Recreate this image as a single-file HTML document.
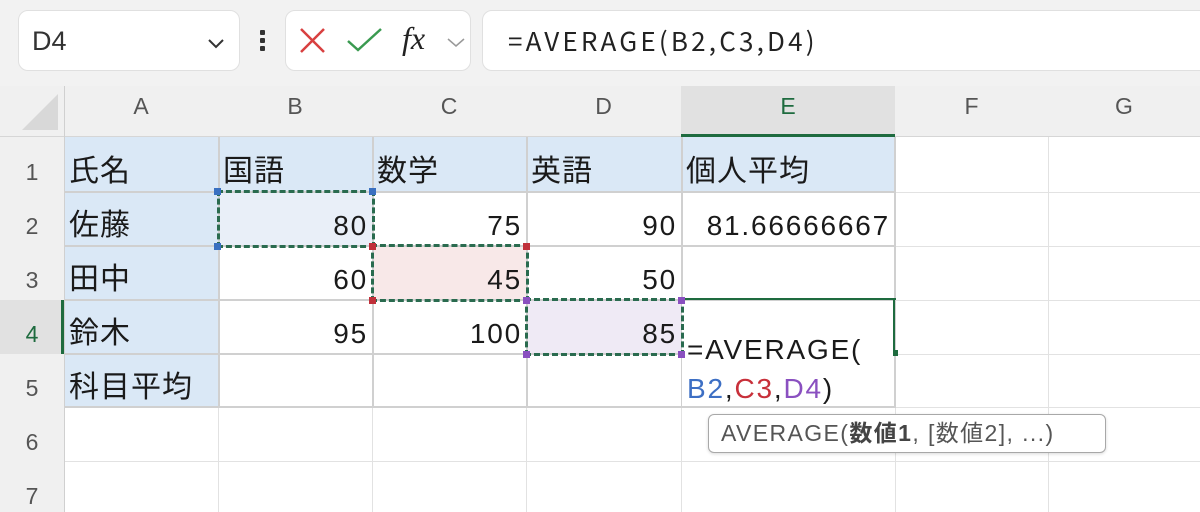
<!DOCTYPE html>
<html><head><meta charset="utf-8"><style>
*{margin:0;padding:0;box-sizing:border-box}
body{width:1200px;height:512px;overflow:hidden;background:#fff;position:relative;font-family:"Liberation Sans","Noto Sans CJK JP",sans-serif}
.a{position:absolute}
.t{position:absolute;font-size:28px;color:#1a1a1a;line-height:54px;white-space:nowrap;letter-spacing:1.8px}
.j{font-size:30px;letter-spacing:1px}
.r{text-align:right}
.hd{position:absolute;font-size:23px;color:#555;text-align:center}
.sel{position:absolute;border:3px dashed #2a6b4f}
.sq{position:absolute;width:7px;height:7px}
</style></head><body>
<div class="a" style="left:0;top:0;width:1200px;height:86px;background:#f2f2f2"></div>
<div class="a" style="left:18px;top:10px;width:222px;height:61px;background:#fff;border:1px solid #e0e0e0;border-radius:10px"></div>
<div class="a" style="left:32px;top:26px;font-size:27px;color:#333">D4</div>
<svg class="a" style="left:206px;top:36px" width="20" height="14"><path d="M3 4 L10 11 L17 4" stroke="#333" stroke-width="2" fill="none"/></svg>
<div class="a" style="left:260px;top:30px;width:5px;height:5px;background:#333;border-radius:1px"></div>
<div class="a" style="left:260px;top:38px;width:5px;height:5px;background:#333;border-radius:1px"></div>
<div class="a" style="left:260px;top:46px;width:5px;height:5px;background:#333;border-radius:1px"></div>
<div class="a" style="left:285px;top:10px;width:186px;height:61px;background:#fff;border:1px solid #e0e0e0;border-radius:10px"></div>
<svg class="a" style="left:298px;top:27px" width="30" height="28"><path d="M3 2 L26 25 M26 2 L3 25" stroke="#d84040" stroke-width="2.5"/></svg>
<svg class="a" style="left:346px;top:27px" width="38" height="26"><path d="M2 14 L12 23 L35 2" stroke="#3a9a50" stroke-width="2.5" fill="none"/></svg>
<div class="a" style="left:402px;top:20px;font-family:'Liberation Serif',serif;font-style:italic;font-size:32px;color:#222">fx</div>
<svg class="a" style="left:445px;top:35px" width="22" height="14"><path d="M3 4 L11 11 L19 4" stroke="#999" stroke-width="1.5" fill="none"/></svg>
<div class="a" style="left:482px;top:10px;width:730px;height:61px;background:#fff;border:1px solid #e0e0e0;border-radius:10px"></div>
<div class="a" style="left:508px;top:24px;font-family:'Noto Sans CJK JP',sans-serif;font-size:26px;color:#222;line-height:34px;letter-spacing:3.2px">=AVERAGE(B2,C3,D4)</div>
<div class="a" style="left:0;top:86px;width:1200px;height:51px;background:#f0f0f0;border-bottom:1px solid #d6d6d6"></div>
<div class="a" style="left:681px;top:86px;width:214px;height:51px;background:#e1e1e1;border-bottom:3px solid #1e6b3f"></div>
<svg class="a" style="left:20px;top:92px" width="40" height="40"><path d="M38 2 L38 38 L2 38 Z" fill="#d8d8d8"/></svg>
<div class="a" style="left:64px;top:86px;width:1px;height:426px;background:#d0d0d0"></div>
<div class="hd" style="left:64px;top:93px;width:154px">A</div>
<div class="hd" style="left:218px;top:93px;width:154px">B</div>
<div class="hd" style="left:372px;top:93px;width:154px">C</div>
<div class="hd" style="left:526px;top:93px;width:155px">D</div>
<div class="hd" style="left:681px;top:93px;width:214px;color:#1e6b3f">E</div>
<div class="hd" style="left:895px;top:93px;width:153px">F</div>
<div class="hd" style="left:1048px;top:93px;width:152px">G</div>
<div class="a" style="left:0;top:137px;width:64px;height:375px;background:#f0f0f0"></div>
<div class="a" style="left:0;top:300px;width:64px;height:54px;background:#e1e1e1;border-right:3px solid #1e6b3f"></div>
<div class="hd" style="left:0;top:159px;width:64px">1</div>
<div class="hd" style="left:0;top:213px;width:64px">2</div>
<div class="hd" style="left:0;top:267px;width:64px">3</div>
<div class="hd" style="left:0;top:321px;width:64px;color:#1e6b3f">4</div>
<div class="hd" style="left:0;top:375px;width:64px">5</div>
<div class="hd" style="left:0;top:429px;width:64px">6</div>
<div class="hd" style="left:0;top:483px;width:64px">7</div>
<div class="a" style="left:65px;top:137px;width:830px;height:55px;background:#dae8f6"></div>
<div class="a" style="left:65px;top:137px;width:153px;height:271px;background:#dae8f6"></div>
<div class="a" style="left:218px;top:192px;width:154px;height:54px;background:#e9eff8"></div>
<div class="a" style="left:372px;top:246px;width:154px;height:54px;background:#f8e8e8"></div>
<div class="a" style="left:526px;top:300px;width:155px;height:54px;background:#efeaf5"></div>
<div class="a" style="left:65px;top:192px;width:1135px;height:1px;background:#e2e2e2"></div>
<div class="a" style="left:65px;top:246px;width:1135px;height:1px;background:#e2e2e2"></div>
<div class="a" style="left:65px;top:300px;width:1135px;height:1px;background:#e2e2e2"></div>
<div class="a" style="left:65px;top:354px;width:1135px;height:1px;background:#e2e2e2"></div>
<div class="a" style="left:65px;top:407px;width:1135px;height:1px;background:#e2e2e2"></div>
<div class="a" style="left:65px;top:461px;width:1135px;height:1px;background:#e2e2e2"></div>
<div class="a" style="left:1048px;top:137px;width:1px;height:375px;background:#e2e2e2"></div>
<div class="a" style="left:218px;top:408px;width:1px;height:104px;background:#e2e2e2"></div>
<div class="a" style="left:372px;top:408px;width:1px;height:104px;background:#e2e2e2"></div>
<div class="a" style="left:526px;top:408px;width:1px;height:104px;background:#e2e2e2"></div>
<div class="a" style="left:681px;top:408px;width:1px;height:104px;background:#e2e2e2"></div>
<div class="a" style="left:895px;top:137px;width:1px;height:375px;background:#e2e2e2"></div>
<div class="a" style="left:218px;top:137px;width:2px;height:271px;background:#d0d0d0"></div>
<div class="a" style="left:372px;top:137px;width:2px;height:271px;background:#d0d0d0"></div>
<div class="a" style="left:526px;top:137px;width:2px;height:271px;background:#d0d0d0"></div>
<div class="a" style="left:681px;top:137px;width:2px;height:271px;background:#d0d0d0"></div>
<div class="a" style="left:894px;top:137px;width:2px;height:271px;background:#d0d0d0"></div>
<div class="a" style="left:65px;top:191px;width:830px;height:2px;background:#d0d0d0"></div>
<div class="a" style="left:65px;top:245px;width:830px;height:2px;background:#d0d0d0"></div>
<div class="a" style="left:65px;top:299px;width:830px;height:2px;background:#d0d0d0"></div>
<div class="a" style="left:65px;top:353px;width:830px;height:2px;background:#d0d0d0"></div>
<div class="a" style="left:65px;top:406px;width:830px;height:2px;background:#d0d0d0"></div>
<div class="a" style="left:682px;top:301px;width:212px;height:105px;background:#fff"></div>
<div class="a" style="left:681px;top:298px;width:215px;height:2px;background:#1e6b3f"></div>
<div class="a" style="left:893px;top:298px;width:2px;height:58px;background:#1e6b3f"></div>
<div class="t j" style="left:69px;top:145px">氏名</div>
<div class="t j" style="left:223px;top:145px">国語</div>
<div class="t j" style="left:377px;top:145px">数学</div>
<div class="t j" style="left:531px;top:145px">英語</div>
<div class="t j" style="left:686px;top:145px">個人平均</div>
<div class="t j" style="left:69px;top:199px">佐藤</div>
<div class="t j" style="left:69px;top:253px">田中</div>
<div class="t j" style="left:69px;top:307px">鈴木</div>
<div class="t j" style="left:69px;top:361px">科目平均</div>
<div class="t r" style="left:218px;top:199px;width:150px">80</div>
<div class="t r" style="left:372px;top:199px;width:150px">75</div>
<div class="t r" style="left:526px;top:199px;width:151px">90</div>
<div class="t r" style="left:681px;top:199px;width:209px">81.66666667</div>
<div class="t r" style="left:218px;top:253px;width:150px">60</div>
<div class="t r" style="left:372px;top:253px;width:150px">45</div>
<div class="t r" style="left:526px;top:253px;width:151px">50</div>
<div class="t r" style="left:218px;top:307px;width:150px">95</div>
<div class="t r" style="left:372px;top:307px;width:150px">100</div>
<div class="t r" style="left:526px;top:307px;width:151px">85</div>
<div class="t" style="left:687px;top:323px">=AVERAGE(</div>
<div class="t" style="left:687px;top:362px"><span style="color:#3d6fc4">B2</span>,<span style="color:#c8303a">C3</span>,<span style="color:#8a50c0">D4</span>)</div>
<div class="sel" style="left:217px;top:190px;width:158px;height:58px"></div>
<div class="sel" style="left:371px;top:244px;width:158px;height:58px"></div>
<div class="sel" style="left:525px;top:298px;width:159px;height:58px"></div>
<div class="sq" style="left:214px;top:188px;background:#3a70c0"></div>
<div class="sq" style="left:369px;top:188px;background:#3a70c0"></div>
<div class="sq" style="left:214px;top:243px;background:#3a70c0"></div>
<div class="sq" style="left:369px;top:243px;background:#c0303a"></div>
<div class="sq" style="left:523px;top:243px;background:#c0303a"></div>
<div class="sq" style="left:369px;top:297px;background:#c0303a"></div>
<div class="sq" style="left:523px;top:297px;background:#8a50c0"></div>
<div class="sq" style="left:678px;top:297px;background:#8a50c0"></div>
<div class="sq" style="left:523px;top:351px;background:#8a50c0"></div>
<div class="sq" style="left:678px;top:351px;background:#8a50c0"></div>
<div class="a" style="left:893px;top:350px;width:5px;height:6px;background:#1e6b3f"></div>
<div class="a" style="left:708px;top:414px;width:398px;height:39px;background:#fff;border:1px solid #a8a8a8;border-radius:6px;box-shadow:0 1px 3px rgba(0,0,0,0.15);font-size:23px;color:#555;line-height:37px;padding-left:12px;white-space:nowrap;letter-spacing:1.4px">AVERAGE(<b style="color:#444">数値1</b>, [数値2], ...)</div>
</body></html>
